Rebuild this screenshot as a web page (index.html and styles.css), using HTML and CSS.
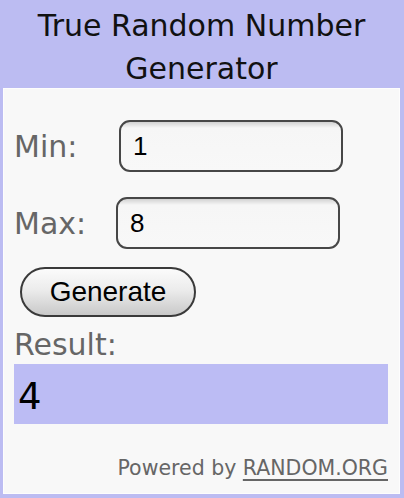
FILE: index.html
```html
<!DOCTYPE html>
<html>
<head>
<meta charset="utf-8">
<link rel="stylesheet" href="styles.css">
</head>
<body>
<div class="widget">
  <div class="title">True Random Number<br>Generator</div>
  <div class="panel">
    <div class="row row-min">
      <span class="label">Min:</span>
      <div class="field">1</div>
    </div>
    <div class="row row-max">
      <span class="label">Max:</span>
      <div class="field">8</div>
    </div>
    <div class="btn-row"><button class="btn">Generate</button></div>
    <div class="result-label">Result:</div>
    <div class="result">4</div>
    <div class="powered">Powered by <span class="link">RANDOM.ORG</span></div>
  </div>
</div>
</body>
</html>
```
FILE: styles.css
```css
html, body {
  margin: 0;
  padding: 0;
}
body {
  width: 404px;
  height: 498px;
  background: #bcbcf2;
  font-family: "DejaVu Sans", Verdana, sans-serif;
  overflow: hidden;
}
.widget {
  padding: 0 4px 4px 3px;
  height: 498px;
  box-sizing: border-box;
  display: flex;
  flex-direction: column;
}
.title {
  text-align: center;
  font-size: 30px;
  line-height: 43px;
  color: #111;
  height: 88px;
  padding-top: 4px;
  box-sizing: border-box;
}
.panel {
  flex: 1;
  background: #f8f8f8;
  border: 1px solid #fdfdfd;
  padding: 0 10px 0 10px;
  display: flex;
  flex-direction: column;
}
.row {
  display: flex;
  align-items: center;
}
.row-min {
  margin-top: 31px;
}
.row-max {
  margin-top: 25px;
}
.label {
  font-size: 30px;
  color: #666;
  width: 105px;
}
.row-max .label {
  width: 102px;
}
.field {
  width: 224px;
  height: 52px;
  box-sizing: border-box;
  border: 2px solid #474747;
  border-radius: 11px;
  background: linear-gradient(#d2d2d2 0, #f6f6f6 6px, #f8f8f8 100%);
  font-family: "Liberation Sans", Arial, sans-serif;
  font-size: 26px;
  line-height: 48px;
  padding-left: 12px;
  color: #000;
}
.btn-row {
  margin-top: 18px;
  padding-left: 6px;
}
.btn {
  width: 176px;
  height: 50px;
  border: 2px solid #3a3a3a;
  border-radius: 25px;
  background: linear-gradient(#fbfbfb 0%, #ececec 45%, #c9c9c9 100%);
  font-family: "Liberation Sans", Arial, sans-serif;
  font-size: 28px;
  color: #000;
  padding: 0;
}
.result-label {
  font-size: 30px;
  color: #666;
  margin-top: 12px;
  line-height: 32px;
}
.result {
  margin-top: 3px;
  margin-right: 1px;
  background: #bcbcf4;
  height: 60px;
  font-size: 37px;
  line-height: 66px;
  color: #000;
  padding-left: 4px;
}
.powered {
  margin-top: auto;
  margin-bottom: 13px;
  text-align: right;
  font-size: 20.5px;
  color: #666;
  padding-right: 1px;
}
.link {
  text-decoration: underline;
  text-underline-offset: 4px;
}
```
